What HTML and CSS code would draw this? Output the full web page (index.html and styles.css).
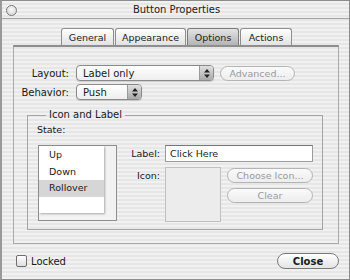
FILE: index.html
```html
<!DOCTYPE html>
<html lang="en">
<head>
    <meta charset="UTF-8">
    <title>Button Properties</title>
    <link rel="stylesheet" href="styles.css">
</head>
<body>

    <div class="window">
        <!-- Title Bar -->
        <div class="titlebar">
            <span class="close-dot"></span>
            <span class="title">Button Properties</span>
        </div>

        <!-- Tabs -->
        <div class="tabs">
            <div class="tab tab-general">General</div>
            <div class="tab tab-appearance">Appearance</div>
            <div class="tab tab-options selected">Options</div>
            <div class="tab tab-actions">Actions</div>
        </div>

        <!-- Options Pane -->
        <div class="pane">
            <div class="row">
                <span class="row-label">Layout:</span>
                <div class="popup popup-layout">
                    <span class="popup-text">Label only</span>
                    <span class="popup-arrows">
                        <svg width="6" height="9" viewBox="0 0 6 9"><path d="M3 0L6 3.5H0Z M3 9L6 5.5H0Z" fill="#222"/></svg>
                    </span>
                </div>
                <div class="pill disabled btn-advanced">Advanced...</div>
            </div>
            <div class="row">
                <span class="row-label">Behavior:</span>
                <div class="popup popup-behavior">
                    <span class="popup-text">Push</span>
                    <span class="popup-arrows">
                        <svg width="6" height="9" viewBox="0 0 6 9"><path d="M3 0L6 3.5H0Z M3 9L6 5.5H0Z" fill="#222"/></svg>
                    </span>
                </div>
            </div>

            <fieldset class="group">
                <legend>Icon and Label</legend>
                <div class="state-label">State:</div>
                <div class="group-main">
                    <div class="list">
                        <div class="list-rows">
                            <div class="list-item">Up</div>
                            <div class="list-item">Down</div>
                            <div class="list-item selected">Rollover</div>
                            <div class="list-item"></div>
                        </div>
                    </div>
                    <div class="fields">
                        <span class="field-label">Label:</span>
                        <div class="text-field">Click Here</div>
                        <span class="field-label">Icon:</span>
                        <div class="icon-row">
                            <div class="icon-well"></div>
                            <div class="icon-buttons">
                                <div class="pill disabled">Choose Icon...</div>
                                <div class="pill disabled">Clear</div>
                            </div>
                        </div>
                    </div>
                </div>
            </fieldset>
        </div>

        <!-- Footer -->
        <div class="footer">
            <label class="check">
                <span class="check-box"></span>
                <span>Locked</span>
            </label>
            <div class="pill btn-close">Close</div>
        </div>
    </div>

</body>
</html>
```

FILE: styles.css
```css
* {
    box-sizing: border-box;
    margin: 0;
    padding: 0;
}

body {
    font-family: 'DejaVu Sans', sans-serif;
    font-size: 9.5px;
    color: #1a1a1a;
    background: #fff;
}

/* Window */
.window {
    width: 350px;
    height: 280px;
    border: 1px solid #8c8c8c;
    border-left: 2px solid #9a9a9a;
    background: repeating-linear-gradient(to bottom, #f1f1f1 0, #f1f1f1 2px, #e6e6e6 2px, #e6e6e6 4px);
    display: flex;
    flex-direction: column;
}

.titlebar {
    height: 18px;
    border-bottom: 1px solid #a2a2a2;
    display: flex;
    align-items: center;
    justify-content: center;
    position: relative;
}

.close-dot {
    position: absolute;
    left: 4px;
    top: 4px;
    width: 11px;
    height: 11px;
    border-radius: 50%;
    border: 1px solid #7a7a7a;
    background: radial-gradient(circle at 50% 40%, #fafafa, #cfcfcf);
}

.title {
    font-size: 10px;
    color: #222;
    margin-left: 2px;
}

/* Tabs */
.tabs {
    margin-top: 9px;
    display: flex;
    justify-content: center;
    padding-left: 2px;
    height: 17px;
}

.tab {
    height: 17px;
    border: 1px solid #8e8e8e;
    border-bottom: none;
    border-radius: 3px 3px 0 0;
    background: linear-gradient(to bottom, #ffffff, #e2e2e2);
    display: flex;
    align-items: center;
    justify-content: center;
    font-size: 9.5px;
    color: #222;
}

.tab + .tab {
    margin-left: 1px;
}

.tab-general { width: 53px; }
.tab-appearance { width: 71px; }
.tab-options { width: 52px; }
.tab-actions { width: 52px; }

.tab.selected {
    background: linear-gradient(to bottom, #e4e4e4, #b4b4b4);
    border-color: #7c7c7c;
}

/* Pane */
.pane {
    margin: 0 10px 0 11px;
    height: 199px;
    border: 1px solid #a9a9a9;
    border-top: 2px solid #8e8e8e;
    padding-top: 18px;
}

.row {
    display: flex;
    align-items: center;
    height: 16px;
    margin-bottom: 3px;
}

.row-label {
    width: 58px;
    text-align: right;
    padding-right: 3px;
    font-size: 10px;
}

.popup {
    height: 16px;
    margin-left: 4px;
    border: 1px solid #8a8a8a;
    border-radius: 4px;
    background: linear-gradient(to bottom, #ffffff, #eeeeee);
    display: flex;
    align-items: center;
    overflow: hidden;
    box-shadow: 0 1px 1px rgba(0, 0, 0, 0.15);
}

.popup-layout { width: 138px; }
.popup-behavior { width: 66px; }

.popup-text {
    flex: 1;
    padding-left: 6px;
    font-size: 10px;
}

.popup-arrows {
    width: 14px;
    height: 100%;
    border-left: 1px solid #9a9a9a;
    background: linear-gradient(to bottom, #e0e0e0, #a9a9a9);
    display: flex;
    align-items: center;
    justify-content: center;
}

.pill {
    height: 15px;
    border: 1px solid #7a7a7a;
    border-radius: 8px;
    background: linear-gradient(to bottom, #ffffff, #e4e4e4);
    display: flex;
    align-items: center;
    justify-content: center;
    font-size: 9.5px;
}

.pill.disabled {
    border-color: #b4b4b4;
    color: #9a9a9a;
    background: linear-gradient(to bottom, #fafafa, #ededed);
}

.btn-advanced {
    width: 75px;
    margin-left: 6px;
}

/* Group box */
.group {
    margin: 9px 15px 0 13px;
    border: 1px solid #a4a4a4;
    padding: 0 0 7px 9px;
}

.group legend {
    margin-left: 9px;
    padding: 0 3px;
    font-size: 10px;
    line-height: 12px;
}

.state-label {
    margin-top: 3px;
    height: 12px;
    line-height: 12px;
}

.group-main {
    display: flex;
    margin-top: 9px;
}

.list {
    width: 79px;
    height: 76px;
    margin-left: 1px;
    border: 1px solid #8e8e8e;
    background: #f2f2f2;
}

.list-rows {
    width: 65px;
    background: #fff;
    box-shadow: 1px 1px 2px rgba(0, 0, 0, 0.3);
    padding-top: 1px;
}

.list-item {
    height: 16.5px;
    line-height: 16.5px;
    padding-left: 10px;
    font-size: 9.5px;
}

.list-item.selected {
    background: #d6d6d6;
}

.fields {
    margin-left: 10px;
    display: grid;
    grid-template-columns: 33px auto;
    column-gap: 5px;
    row-gap: 5px;
    align-items: start;
}

.field-label {
    text-align: right;
    line-height: 17px;
}

.text-field {
    width: 148px;
    height: 17px;
    border: 1px solid #9a9a9a;
    border-top-color: #777;
    background: #fff;
    padding-left: 4px;
    line-height: 15px;
}

.icon-row {
    display: flex;
}

.icon-well {
    width: 56px;
    height: 55px;
    border: 1px solid #c0c0c0;
    background: #ececec;
}

.icon-buttons {
    margin-left: 6px;
    display: flex;
    flex-direction: column;
    gap: 5px;
    padding-top: 1px;
}

.icon-buttons .pill {
    width: 86px;
}

/* Footer */
.footer {
    display: flex;
    justify-content: space-between;
    align-items: center;
    padding: 9px 10px 0 14px;
}

.check {
    display: flex;
    align-items: center;
    gap: 4px;
    font-size: 10px;
}

.check-box {
    width: 11px;
    height: 12px;
    border: 1px solid #6e6e6e;
    border-radius: 2px;
    background: linear-gradient(to bottom, #ffffff, #dedede);
}

.btn-close {
    width: 62px;
    height: 16px;
    font-weight: bold;
    font-size: 10px;
}
```
